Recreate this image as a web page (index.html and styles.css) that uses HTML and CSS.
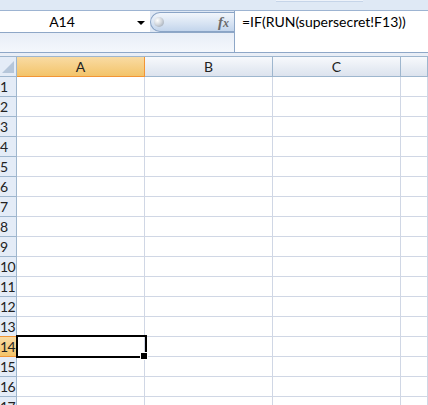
FILE: index.html
```html
<!DOCTYPE html>
<html>
<head>
<meta charset="utf-8">
<link rel="stylesheet" href="styles.css">
</head>
<body>
<div class="app">
  <div class="topstrip"><div class="tabstub"></div></div>
  <div class="fbar">
    <div class="leftpane">
      <div class="namerow">
        <div class="namebox"><span class="nametext">A14</span><span class="arrow"></span></div>
        <div class="pill"><span class="grip"></span><span class="fx"><i>f</i><i class="fxx">x</i></span></div>
      </div>
      <div class="leftbelow"></div>
    </div>
    <div class="formula">=IF(RUN(supersecret!F13))</div>
  </div>
  <div class="gap"></div>
  <div class="grid">
    <div class="corner"><span class="tri"></span></div>
    <div class="ch ch-sel">A</div>
    <div class="ch">B</div>
    <div class="ch">C</div>
    <div class="ch"></div>

    <div class="rh">1</div><div class="c"></div><div class="c"></div><div class="c"></div><div class="c"></div>
    <div class="rh">2</div><div class="c"></div><div class="c"></div><div class="c"></div><div class="c"></div>
    <div class="rh">3</div><div class="c"></div><div class="c"></div><div class="c"></div><div class="c"></div>
    <div class="rh">4</div><div class="c"></div><div class="c"></div><div class="c"></div><div class="c"></div>
    <div class="rh">5</div><div class="c"></div><div class="c"></div><div class="c"></div><div class="c"></div>
    <div class="rh">6</div><div class="c"></div><div class="c"></div><div class="c"></div><div class="c"></div>
    <div class="rh">7</div><div class="c"></div><div class="c"></div><div class="c"></div><div class="c"></div>
    <div class="rh">8</div><div class="c"></div><div class="c"></div><div class="c"></div><div class="c"></div>
    <div class="rh">9</div><div class="c"></div><div class="c"></div><div class="c"></div><div class="c"></div>
    <div class="rh">10</div><div class="c"></div><div class="c"></div><div class="c"></div><div class="c"></div>
    <div class="rh">11</div><div class="c"></div><div class="c"></div><div class="c"></div><div class="c"></div>
    <div class="rh">12</div><div class="c"></div><div class="c"></div><div class="c"></div><div class="c"></div>
    <div class="rh">13</div><div class="c"></div><div class="c"></div><div class="c"></div><div class="c"></div>
    <div class="rh rh-sel">14</div><div class="c sel"></div><div class="c"></div><div class="c"></div><div class="c"></div>
    <div class="rh">15</div><div class="c"></div><div class="c"></div><div class="c"></div><div class="c"></div>
    <div class="rh">16</div><div class="c"></div><div class="c"></div><div class="c"></div><div class="c"></div>
    <div class="rh">17</div><div class="c"></div><div class="c"></div><div class="c"></div><div class="c"></div>
  </div>
</div>
</body>
</html>
```

FILE: styles.css
```css
html, body {
  margin: 0;
  padding: 0;
  background: #ffffff;
  overflow: hidden;
}
.app {
  width: 428px;
  height: 405px;
  overflow: hidden;
  font-family: Lato, "Liberation Sans", sans-serif;
  color: #000;
}
.topstrip {
  height: 10px;
  background: #dfe9f5;
  border-bottom: 1px solid #9db4d2;
  position: relative;
}
.tabstub {
  margin-left: 276px;
  width: 87px;
  height: 1px;
  background: #eef3fa;
  border-bottom: 1px solid #c6d5e9;
}
.fbar {
  display: flex;
  height: 41px;
  border-bottom: 1px solid #8ea7c7;
}
.leftpane {
  width: 234px;
  display: flex;
  flex-direction: column;
  background: #dfe8f5;
}
.namerow {
  height: 21px;
  display: flex;
  border-bottom: 1px solid #8ea7c7;
}
.namebox {
  width: 150px;
  background: #fff;
  display: flex;
  align-items: flex-start;
}
.nametext {
  width: 124px;
  text-align: center;
  font-size: 14px;
  line-height: 16px;
  padding-top: 3px;
}
.arrow {
  margin-left: 13px;
  margin-top: 10px;
  width: 0;
  height: 0;
  border-left: 4px solid transparent;
  border-right: 4px solid transparent;
  border-top: 4px solid #000;
}
.pill {
  flex: 1;
  margin-top: 1px;
  height: 18px;
  border: 1px solid #8aa4c6;
  border-right: none;
  border-radius: 10px 0 0 10px;
  background: linear-gradient(#f1f5fb, #dbe6f4 50%, #c3d5ec);
  display: flex;
  align-items: center;
  padding: 0 0 0 3px;
}
.grip {
  width: 10px;
  height: 10px;
  border-radius: 50%;
  background: radial-gradient(circle at 35% 35%, #ffffff 0, #d3d8de 45%, #8f9aa8 100%);
}
.fx {
  margin-left: auto;
  margin-right: 5px;
  font-family: "Liberation Serif", serif;
  font-style: italic;
  font-weight: bold;
  color: #6a6a6a;
  font-size: 15px;
  line-height: 16px;
  margin-top: 1px;
}
.fx i { font-style: italic; }
.fxx {
  font-size: 12px;
}
.leftbelow {
  flex: 1;
  background: linear-gradient(#e8eef7, #f4f7fc);
}
.formula {
  flex: 1;
  background: #fff;
  border-left: 1px solid #8ea7c7;
  font-size: 14px;
  line-height: 16px;
  padding: 3px 0 0 7px;
  white-space: nowrap;
}
.gap {
  height: 3px;
  background: #e9eef6;
}
.grid {
  display: grid;
  grid-template-columns: 17px 128px 128px 128px 1fr;
  grid-auto-rows: 20px;
  border-top: 1px solid #9eb6ce;
}
.grid > div {
  box-sizing: border-box;
}
.corner {
  background: #e4ecf7;
  border-right: 1px solid #9eb6ce;
  border-bottom: 1px solid #9eb6ce;
  position: relative;
}
.tri {
  position: absolute;
  right: 2px;
  bottom: 3px;
  width: 0;
  height: 0;
  border-left: 12px solid transparent;
  border-bottom: 12px solid #b5c6da;
}
.ch {
  background: linear-gradient(#f7f9fc, #dce3ee);
  border-right: 1px solid #9eb6ce;
  border-bottom: 1px solid #9eb6ce;
  text-align: center;
  font-size: 14px;
  line-height: 19px;
  color: #222;
}
.ch-sel {
  background: linear-gradient(#f9dba3, #f3c46a);
  border-right-color: #f29536;
  border-bottom-color: #f29536;
  box-shadow: -1px 0 0 #f29536;
}
.rh {
  background: #e4ecf7;
  border-right: 1px solid #9eb6ce;
  border-bottom: 1px solid #9eb6ce;
  font-size: 14px;
  line-height: 19px;
  color: #222;
  white-space: nowrap;
  overflow: hidden;
  padding-left: 0;
  letter-spacing: -0.5px;
}
.rh-sel {
  background: linear-gradient(#f9dba3, #f3c46a);
  border-right-color: #f29536;
  border-bottom-color: #f29536;
  box-shadow: 0 -1px 0 #f29536;
}
.c {
  background: #fff;
  border-right: 1px solid #d0d7e5;
  border-bottom: 1px solid #d0d7e5;
}
.sel {
  position: relative;
}
.sel::before {
  content: "";
  position: absolute;
  left: -1px;
  top: -2px;
  width: 131px;
  height: 23px;
  box-sizing: border-box;
  border: 2px solid #000;
  z-index: 2;
}
.sel::after {
  content: "";
  position: absolute;
  left: 123px;
  top: 15px;
  width: 8px;
  height: 8px;
  box-sizing: border-box;
  background: #000;
  border: 1px solid #fff;
  z-index: 3;
}
```
